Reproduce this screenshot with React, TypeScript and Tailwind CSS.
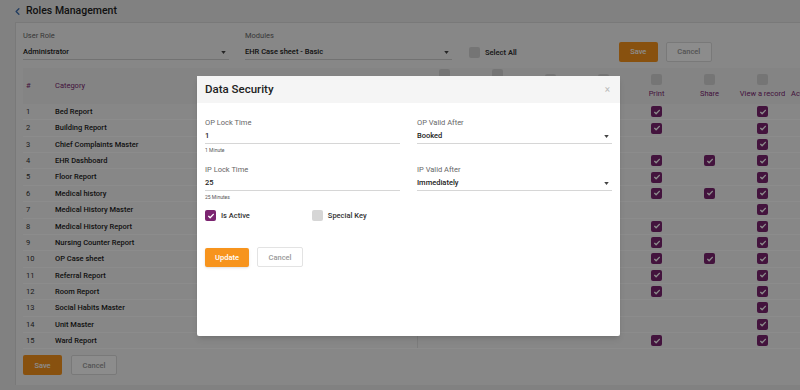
import { ChevronLeft } from "lucide-react";

const rows = [
  "Bed Report",
  "Building Report",
  "Chief Complaints Master",
  "EHR Dashboard",
  "Floor Report",
  "Medical history",
  "Medical History Master",
  "Medical History Report",
  "Nursing Counter Report",
  "OP Case sheet",
  "Referral Report",
  "Room Report",
  "Social Habits Master",
  "Unit Master",
  "Ward Report",
];

const printRows = [1, 2, 4, 5, 6, 8, 9, 10, 11, 12, 15];
const shareRows = [4, 6, 10];

const columns = ["Create a record", "Update a record", "Delete", "Export", "Print", "Share", "View a record", "Actions"];

function Check({ on }: { on: boolean }) {
  if (!on) return <span className="block h-[11px] w-[11px] rounded-[2px] bg-[#d6d6d6]" />;
  return (
    <span className="flex h-[11px] w-[11px] items-center justify-center rounded-[2px] bg-[#7b2470]">
      <svg viewBox="0 0 12 12" className="h-[8px] w-[8px]" fill="none" stroke="white" strokeWidth={2} strokeLinecap="round" strokeLinejoin="round">
        <path d="M2.5 6.5l2.2 2.2L9.5 3.5" />
      </svg>
    </span>
  );
}

function Caret() {
  return (
    <svg viewBox="0 0 6 4" className="h-[3px] w-[5px]" fill="#444">
      <path d="M0 0h6L3 4z" />
    </svg>
  );
}

function SelectField({ label, value, width }: { label: string; value: string; width: string }) {
  return (
    <div className={width}>
      <p className="text-[7.5px] leading-[10px] text-[#666]">{label}</p>
      <div className="mt-[6px] flex items-center justify-between border-b border-[#cfcfcf] pb-[2px] pr-[3px]">
        <span className="text-[7.5px] font-medium leading-[10px] text-[#222]">{value}</span>
        <Caret />
      </div>
    </div>
  );
}

function ModalField({ label, value, helper, select }: { label: string; value: string; helper?: string; select?: boolean }) {
  return (
    <div>
      <p className="text-[7.5px] leading-[10px] text-[#666]">{label}</p>
      <div className="mt-[3px] flex items-center justify-between border-b border-[#d6d6d6] pb-[2px] pr-[3px]">
        <span className="text-[7.5px] font-medium leading-[10px] text-[#222]">{value}</span>
        {select && <Caret />}
      </div>
      {helper && <p className="mt-[2px] text-[5px] leading-[8px] text-[#555]">{helper}</p>}
    </div>
  );
}

export default function App() {
  return (
    <div className="relative h-[390px] w-[800px] overflow-hidden bg-[#ececec] font-['Roboto',sans-serif]">
      {/* title */}
      <div className="flex h-[22px] items-center gap-[3px] pl-[12px]">
        <ChevronLeft className="h-[11px] w-[11px] text-[#3f6fb0]" strokeWidth={3} />
        <h1 className="text-[10.5px] font-medium text-[#222]">Roles Management</h1>
      </div>

      <div className="ml-[15px] h-[363px] border-l border-t border-[#dcdcdc] bg-[#f6f6f6] pl-[7px] pt-[8px]">
        {/* filters */}
        <div className="flex h-[37px] items-start">
          <SelectField label="User Role" value="Administrator" width="w-[206px]" />
          <div className="ml-[16px]">
            <SelectField label="Modules" value="EHR Case sheet - Basic" width="w-[207px]" />
          </div>
          <div className="ml-[17px] mt-[16px] flex items-center gap-[5px]">
            <Check on={false} />
            <span className="text-[7.5px] font-semibold text-[#333]">Select All</span>
          </div>
          <button className="ml-[102px] mt-[11px] h-[20px] w-[39px] rounded-[2px] bg-[#f7941d] text-[7.5px] font-medium text-white">Save</button>
          <button className="ml-[8px] mt-[11px] h-[20px] w-[46px] rounded-[2px] border border-[#ddd] bg-white text-[7.5px] font-medium text-[#999]">Cancel</button>
        </div>

        {/* table */}
        <div className="w-[900px]">
          <div className="flex h-[36px] bg-[#f0f0f0]">
            <div className="flex w-[28px] items-center pl-[3px] text-[7.5px] text-[#7b2470]">#</div>
            <div className="flex w-[367px] items-center pl-[4px] text-[7.5px] text-[#7b2470]">Category</div>
            {columns.map((c, i) => (
              <div key={c} className={`flex w-[53px] flex-col items-center gap-[4px] ${i < 2 ? "pt-[1px]" : "pt-[6px]"}`}>
                <Check on={false} />
                <span className={`text-center text-[7.5px] leading-[9px] text-[#7b2470] ${i === 7 ? "self-start pl-[2px]" : ""}`}>{c}</span>
              </div>
            ))}
          </div>
          {rows.map((r, i) => {
            const n = i + 1;
            return (
              <div key={r} className="flex h-[16.36px] items-center border-b border-white">
                <div className="w-[28px] pl-[3px] text-[7.5px] text-[#333]">{n}</div>
                <div className="h-full w-[367px] border-r border-[#e2e2e2] pl-[4px] text-[7.5px] font-medium leading-[16px] text-[#222]">{r}</div>
                <div className="flex w-[53px] justify-center">{n < 15 && <Check on={true} />}</div>
                <div className="flex w-[53px] justify-center">{n < 15 && n % 2 === 1 && <Check on={true} />}</div>
                <div className="flex w-[53px] justify-center">{n < 15 && n % 3 === 1 && <Check on={true} />}</div>
                <div className="flex w-[53px] justify-center">{n < 15 && n % 4 === 1 && <Check on={true} />}</div>
                <div className="flex w-[53px] justify-center">{printRows.includes(n) && <Check on={true} />}</div>
                <div className="flex w-[53px] justify-center">{shareRows.includes(n) && <Check on={true} />}</div>
                <div className="flex w-[53px] justify-center"><Check on={true} /></div>
                <div className="w-[53px]" />
              </div>
            );
          })}
        </div>

        <div className="mt-[6px] flex gap-[9px]">
          <button className="h-[20px] w-[39px] rounded-[2px] bg-[#f7941d] text-[7.5px] font-medium text-white">Save</button>
          <button className="h-[20px] w-[46px] rounded-[2px] border border-[#ddd] bg-white text-[7.5px] font-medium text-[#999]">Cancel</button>
        </div>
      </div>

      {/* backdrop */}
      <div className="absolute inset-0 bg-black/45" />

      {/* modal */}
      <div className="absolute left-[197px] top-[76px] h-[260px] w-[423px] rounded-[2px] bg-white shadow-md">
        <div className="flex h-[27px] items-center justify-between bg-[#f5f5f5] pl-[8px] pr-[10px]">
          <h2 className="text-[11.5px] font-medium text-[#222]">Data Security</h2>
          <span className="text-[10px] leading-none text-[#bbb]">×</span>
        </div>
        <div className="px-[8px] pt-[15px]">
          <div className="grid grid-cols-2 gap-x-[17px] gap-y-[11px]">
            <ModalField label="OP Lock Time" value="1" helper="1 Minute" />
            <ModalField label="OP Valid After" value="Booked" select />
            <ModalField label="IP Lock Time" value="25" helper="25 Minutes" />
            <ModalField label="IP Valid After" value="Immediately" select />
          </div>
          <div className="mt-[9px] flex items-center">
            <Check on={true} />
            <span className="ml-[5px] text-[7.5px] font-medium text-[#333]">Is Active</span>
            <span className="ml-[62px]"><Check on={false} /></span>
            <span className="ml-[5px] text-[7.5px] font-medium text-[#333]">Special Key</span>
          </div>
          <div className="mt-[26px] flex items-center gap-[8px]">
            <button className="h-[19px] w-[44px] rounded-[2px] bg-[#f7941d] text-[7.5px] font-medium text-white shadow-sm">Update</button>
            <button className="h-[20px] w-[46px] rounded-[2px] border border-[#e3e3e3] bg-white text-[7.5px] font-medium text-[#999]">Cancel</button>
          </div>
        </div>
      </div>
    </div>
  );
}
